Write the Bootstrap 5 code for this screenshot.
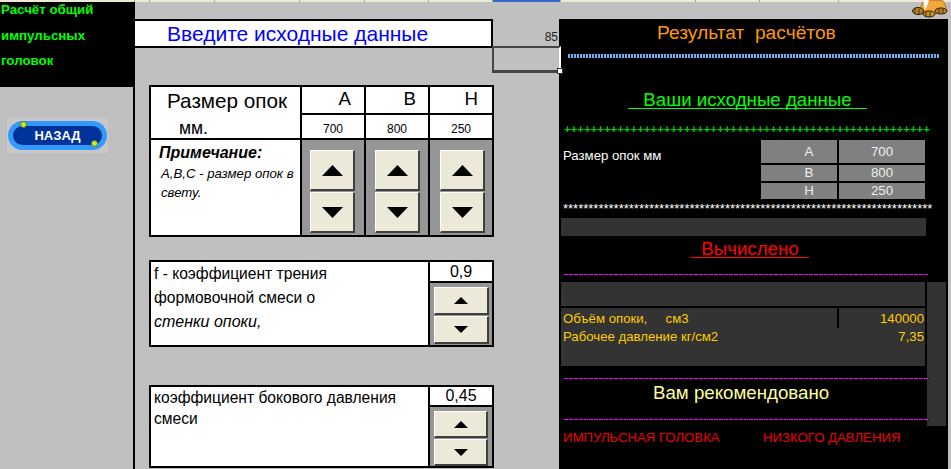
<!DOCTYPE html>
<html lang="ru"><head><meta charset="utf-8"><title>Расчёт</title>
<link href="https://cdn.jsdelivr.net/npm/bootstrap@5.3.0/dist/css/bootstrap.min.css" rel="stylesheet">
<style>
html,body{height:469px;overflow:hidden}
body{background:#c0c0c0;font-family:"Liberation Sans",Arial,sans-serif;color:#000;position:relative;line-height:1.2}
.topstrip{height:2px;background:#ece9d8}
.topstrip i{display:block;height:2px;border-right:1px solid #a8a48c;flex:none}
.topstrip .sel{background:#316ac5}
.page{height:467px}
.lside{width:135px;flex:none}
.lhead{height:85px;background:#000;color:#0f0;font-weight:700;font-size:13.3px;padding-left:1px}
.lhead div{height:25px;line-height:16px}
.lhead div:first-child{height:26px}
.lbody{height:382px;border-right:2px solid #000;padding:31px 0 0 7px}
.backbox{width:101px;height:35px;background:#c8c8c8;padding:2px 1px;position:relative;display:block;border:0;border-radius:0}
.backpill{height:29px;background:#39f;border-radius:15px;padding:5px;display:block}
.backin{display:block;height:19px;background:#039;border-radius:10px;color:#fff;font-weight:700;font-size:13px;line-height:19px;text-align:center}
.dot{position:absolute;width:7px;height:7px;border-radius:50%;background:#c6e82e;border:1px solid #5a7a10}
.dot1{left:13px;top:3px}.dot2{left:84px;top:22px}
.mid{width:424px;flex:none;padding-top:17px}
.ttl{box-sizing:content-box;width:324px;height:25px;background:#fff;border-top:2px solid #000;border-bottom:2px solid #000;border-right:2px solid #000;color:#00f;font-size:21px;line-height:25px;padding-left:32px}
.val85{flex:1;text-align:right;font-size:12px;color:#222;padding:11px 1px 0 0}
.selbox{margin-left:357px;width:69px;height:27px;border:2px solid #444;border-bottom-width:3px;border-right:2px solid #fff;position:relative;margin-top:-2px;margin-bottom:-1px;z-index:2}
.handle{position:absolute;right:-4px;bottom:-4px;width:6px;height:6px;background:#fff;border:1px solid #333}
.gtbl{display:grid;gap:2px;padding:2px;background:#000;margin-left:14px;width:345px}
.t1{grid-template-columns:149px 62px 62px 62px;grid-template-rows:26px 23px 95px;margin-top:13px}
.t2{grid-template-columns:277px 62px;grid-template-rows:19px 62px;margin-top:23px}
.t3{grid-template-columns:277px 62px;grid-template-rows:18px 59px;margin-top:38px}
.wc{background:#fff}
.cellhd{grid-row:span 2;text-align:left}
.sz1{font-size:20.7px;line-height:24px;padding:2px 0 0 16px;height:27px}
.sz2{font-size:17.5px;line-height:20px;padding:4px 0 0 28px}
.lt{font-size:18.7px;line-height:24px;text-align:right}
.ltA{padding-right:13px}.ltB{padding-right:12px}.ltH{padding-right:14px}
.num{font-size:12px;padding-top:4px;text-align:center;line-height:21px}
.note{padding:3px 0 0 8px}
.noteh{font-size:16px;font-weight:700;font-style:italic;line-height:20px}
.notet{font-size:13.2px;font-style:italic;line-height:19px;padding-top:1px;padding-left:2px}
.sp{background:#969696;padding:10px 0 0 8px}
.spb{display:block;padding:0;background:#ece9d8;border:0;border-top:1px solid #fff;border-left:1px solid #fff;border-right:2px solid #404040;border-bottom:2px solid #404040;border-radius:0;width:45px;height:41px;margin-bottom:1px;line-height:0}
.sp.b2{padding-left:9px}.sp.b3{padding-left:10px}
.sps{padding:4px 0 0 4px}
.spb.s{width:55px;height:28px}
.t3 .sps .spb.s{width:54px;height:27px}
.desc{font-size:15.6px;line-height:24px;padding:0 0 0 3px}
.t3 .desc{line-height:21px}
.desc i{display:block;font-size:16px}
.vl{font-size:16px;line-height:18px;text-align:center}
.t2 .vl{padding-top:1px}
.right{width:389px;flex:none;margin-top:17px;background:#000;height:450px;color:#fff;font-size:13.2px}
.rt{font-size:19.2px;color:#f90;line-height:28px;padding-left:98px}
.dots{height:4px;margin:7px 0 0 9px;width:372px;background:repeating-linear-gradient(90deg,#6ab0f0 0 2px,#000 2px 3px)}
.ug{margin:30px 0 0 69px;width:239px;height:21px;border-bottom:1px solid #0f0;color:#0f0;font-size:18.7px;line-height:24px;text-align:center;white-space:nowrap}
.rep{white-space:nowrap;line-height:14px;height:14px}
.plus{color:#0c0;margin:13px 0 0 5px;font-size:11.4px;font-weight:700}
.inp{margin-top:4px;height:60px;padding-left:4px}
.inpl{width:198px;padding-top:8px}
.gcols{display:grid;grid-template-columns:76px 86px;grid-template-rows:23px 16px 16px;gap:2px}
.gc{background:#808080;color:#eee;text-align:center;font-size:13.3px;line-height:23px}
.gc.sm{line-height:16px}
.lett{padding-left:20px}
.stars{margin:2px 0 0 4px;font-size:13px}
.dark{background:#333}
.bar1{height:18px;margin:2px 0 0 2px;width:365px}
.red{color:red;font-size:18.7px;margin:1px 0 0 131px;width:119px;height:21px;border-bottom:1px solid red;line-height:24px;text-align:center;padding-left:1px}
.mag{height:1px;width:365px;margin-left:5px;background:repeating-linear-gradient(90deg,#f0f 0 4px,#000 4px 5px)}
.mag1{margin-top:16px}
.zone{display:flex;margin-top:7px;height:144px}
.zmain{width:364px;margin-left:2px}
.zcol{width:19px;margin-left:2px;height:144px}
.darkt{height:24px}
.drow{display:flex;height:20px;margin-top:2px;color:#fc0;line-height:22px}
.drow .c1{width:276px;padding-left:2px}
.drow .c2{width:86px;margin-left:2px;text-align:right;padding-right:1px}
.dblock{height:38px;padding:0 1px 0 2px;color:#fc0;line-height:18px}
.lay{position:relative}
.over{position:absolute;left:5px;top:96px;width:380px}
.over .mag{margin-left:0}
.rec{color:#ff9;font-size:18.7px;line-height:24px;height:24px;padding-left:89px;margin-top:2px}
.over .mag2{margin-top:14px}
.recs{color:#e00;line-height:16px;margin:10px 0 0 -1px}
.recs span{display:inline-block;width:200px}
.dog{position:absolute;right:2px;top:0}
</style></head><body>
<div class="topstrip d-flex"><i style="width:135px"></i><i style="width:15px"></i><i style="width:65px"></i><i style="width:85px"></i><i style="width:65px"></i><i style="width:64px"></i><i style="width:64px"></i><i class="sel" style="width:68px"></i><i style="width:135px"></i><i style="width:64px"></i><i style="width:79px"></i></div>
<div class="page d-flex">
 <div class="lside">
  <div class="lhead"><div>Расчёт общий</div><div>импульсных</div><div>головок</div></div>
  <div class="lbody"><button type="button" class="backbox"><span class="backpill"><span class="backin">НАЗАД</span></span><span class="dot dot1"></span><span class="dot dot2"></span></button></div>
 </div>
 <div class="mid">
  <div class="d-flex"><div class="ttl">Введите исходные данные</div><div class="val85">85</div></div>
  <div class="selbox"><span class="handle"></span></div>
  <div class="gtbl t1">
   <div class="wc cellhd"><div class="sz1">Размер опок</div><div class="sz2">мм.</div></div>
   <div class="wc lt ltA">A</div><div class="wc lt ltB">B</div><div class="wc lt ltH">H</div>
   <div class="wc num">700</div><div class="wc num">800</div><div class="wc num">250</div>
   <div class="wc note"><div class="noteh">Примечание:</div><div class="notet">A,B,C - размер опок в свету.</div></div>
   <div class="sp"><button class="spb"><svg width="21" height="11"><path d="M10.5 0 21 11H0z"/></svg></button><button class="spb"><svg width="21" height="11"><path d="M0 0H21L10.5 11z"/></svg></button></div>
   <div class="sp b2"><button class="spb"><svg width="21" height="11"><path d="M10.5 0 21 11H0z"/></svg></button><button class="spb"><svg width="21" height="11"><path d="M0 0H21L10.5 11z"/></svg></button></div>
   <div class="sp b3"><button class="spb"><svg width="21" height="11"><path d="M10.5 0 21 11H0z"/></svg></button><button class="spb"><svg width="21" height="11"><path d="M0 0H21L10.5 11z"/></svg></button></div>
  </div>
  <div class="gtbl t2">
   <div class="wc desc" style="grid-row:span 2">f - коэффициент трения<br>формовочной смеси о<br><i>стенки опоки,</i></div>
   <div class="wc vl">0,9</div>
   <div class="sp sps"><button class="spb s"><svg width="14" height="7"><path d="M7 0 14 7H0z"/></svg></button><button class="spb s"><svg width="14" height="7"><path d="M0 0H14L7 7z"/></svg></button></div>
  </div>
  <div class="gtbl t3">
   <div class="wc desc" style="grid-row:span 2">коэффициент бокового давления<br>смеси</div>
   <div class="wc vl">0,45</div>
   <div class="sp sps"><button class="spb s"><svg width="14" height="7"><path d="M7 0 14 7H0z"/></svg></button><button class="spb s"><svg width="14" height="7"><path d="M0 0H14L7 7z"/></svg></button></div>
  </div>
 </div>
 <div class="right">
  <div class="rt">Результат&nbsp; расчётов</div>
  <div class="dots"></div>
  <div class="ug">Ваши исходные данные</div>
  <div class="rep plus">+++++++++++++++++++++++++++++++++++++++++++++++++++++++</div>
  <div class="inp d-flex"><div class="inpl">Размер опок мм</div><div class="gcols"><div class="gc lett">A</div><div class="gc">700</div><div class="gc sm lett">B</div><div class="gc sm">800</div><div class="gc sm lett">H</div><div class="gc sm">250</div></div></div>
  <div class="rep stars">*************************************************************************</div>
  <div class="dark bar1"></div>
  <div class="red">Вычислено</div>
  <div class="mag mag1"></div>
  <div class="lay">
   <div class="zone">
    <div class="zmain">
     <div class="dark darkt"></div>
     <div class="drow"><div class="dark c1">Объём опоки, &nbsp; &nbsp; см3</div><div class="dark c2">140000</div></div>
     <div class="dark dblock"><div class="d-flex justify-content-between"><span>Рабочее давление кг/см2</span><span>7,35</span></div></div>
    </div>
    <div class="dark zcol"></div>
   </div>
   <div class="over">
    <div class="mag"></div>
    <div class="rec">Вам рекомендовано</div>
    <div class="mag mag2"></div>
    <div class="recs"><span>ИМПУЛЬСНАЯ ГОЛОВКА</span>НИЗКОГО ДАВЛЕНИЯ</div>
   </div>
  </div>
 </div>
</div>
<svg class="dog" width="37" height="19" viewBox="0 0 37 19"><path d="M8 12C9 6 11 0 13 0H30C33 3 35 8 34 12L12 15z" fill="#f2a73a" stroke="#8a5a10" stroke-width=".7"/><path d="M11 0h6l-2 6-2 4z" fill="#fff"/><ellipse cx="6" cy="11" rx="5.5" ry="3.5" fill="#b9822c" stroke="#2a1a00"/><ellipse cx="17" cy="14" rx="6" ry="3" fill="#c9923a" stroke="#2a1a00"/><ellipse cx="29" cy="11" rx="6" ry="3" fill="#b9822c" stroke="#2a1a00"/><path d="M3 9v4M7 9v5M14 12v4M18 12v5M27 9v4M31 9v4" stroke="#2a1a00" stroke-width=".8"/></svg>
</body></html>
